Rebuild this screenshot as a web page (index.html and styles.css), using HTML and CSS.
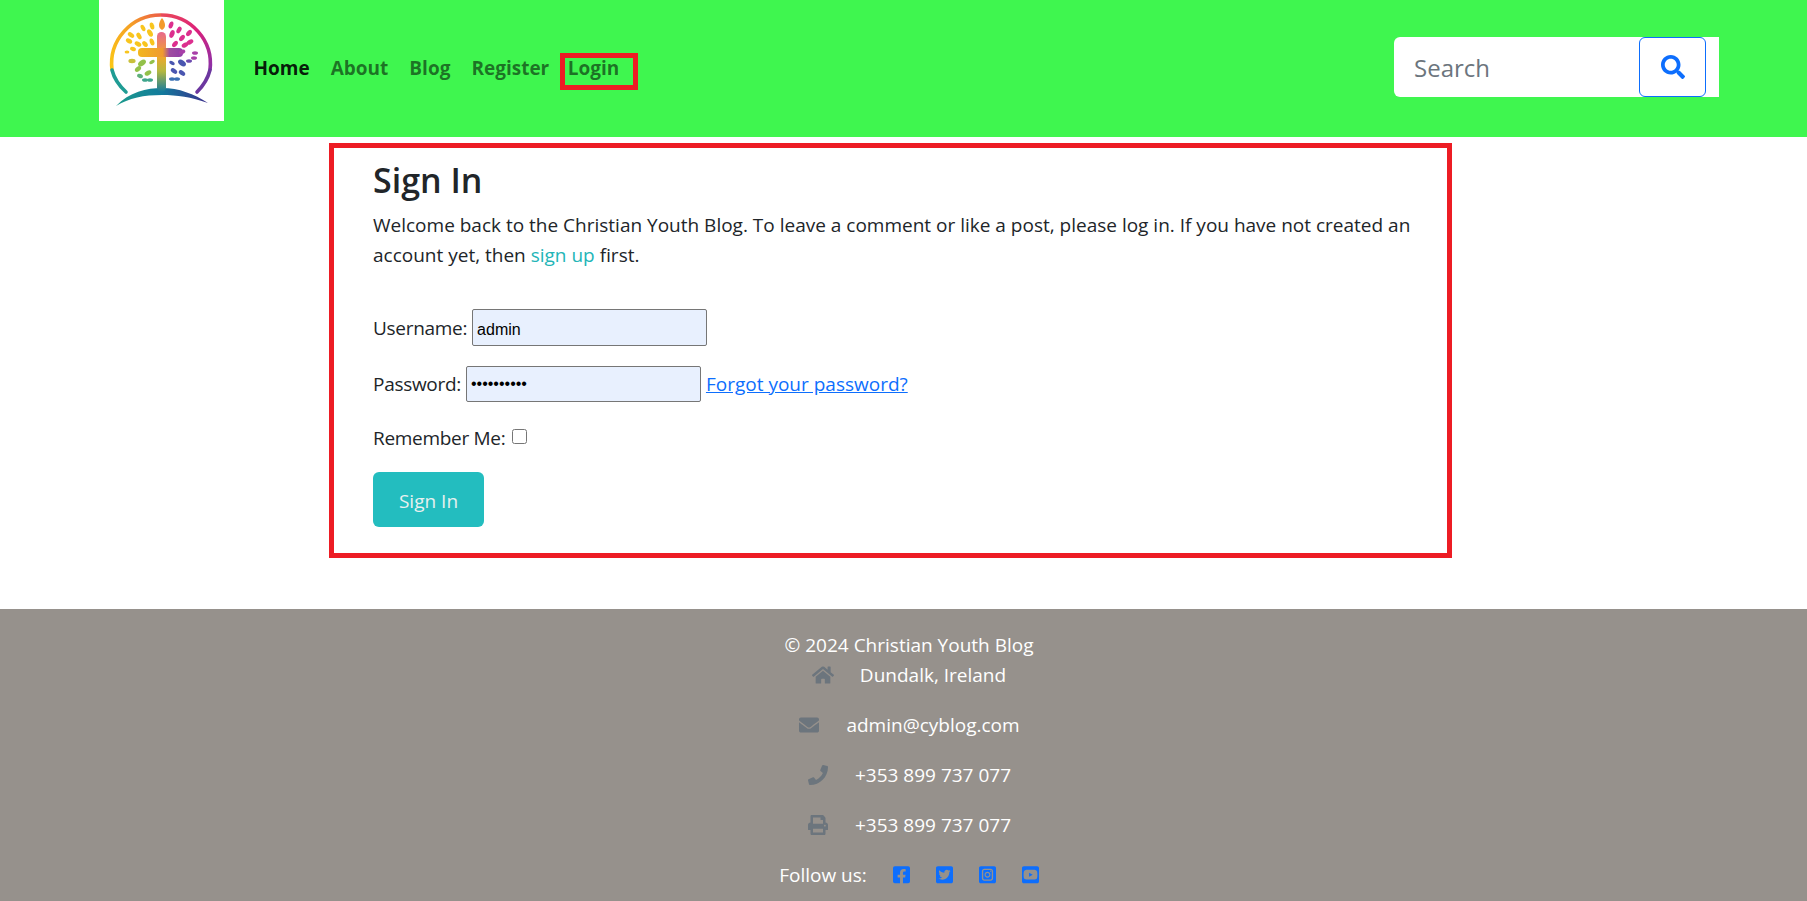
FILE: index.html
```html
<!DOCTYPE html>
<html lang="en">
<head>
    <meta charset="UTF-8">
    <meta name="viewport" content="width=device-width, initial-scale=1.0">
    <title>Sign In</title>
    <link rel="stylesheet" href="styles.css">
</head>
<body>

    <header class="site-header">
        <a class="logo" href="#">
            <svg viewBox="0 0 125 121" width="125" height="121">
                <defs>
                    <linearGradient id="ringLeft" x1="0" y1="1" x2="1" y2="0">
                        <stop offset="0" stop-color="#fbc815"/>
                        <stop offset="0.6" stop-color="#f5a125"/>
                        <stop offset="1" stop-color="#ec5f47"/>
                    </linearGradient>
                    <linearGradient id="ringRight" x1="0" y1="0" x2="1" y2="1">
                        <stop offset="0" stop-color="#ea4a58"/>
                        <stop offset="0.5" stop-color="#dc1f7a"/>
                        <stop offset="1" stop-color="#8a30a8"/>
                    </linearGradient>
                    <linearGradient id="ground" x1="0" y1="0" x2="1" y2="0">
                        <stop offset="0" stop-color="#1c9c8c"/>
                        <stop offset="0.5" stop-color="#127a9c"/>
                        <stop offset="1" stop-color="#3b2d8c"/>
                    </linearGradient>
                    <linearGradient id="stem" x1="0" y1="0" x2="0" y2="1">
                        <stop offset="0" stop-color="#e8688c"/>
                        <stop offset="0.4" stop-color="#f2a72a"/>
                        <stop offset="0.65" stop-color="#b5b840"/>
                        <stop offset="1" stop-color="#127a9e"/>
                    </linearGradient>
                    <linearGradient id="arm" x1="0" y1="0" x2="1" y2="0">
                        <stop offset="0" stop-color="#f2b71f"/>
                        <stop offset="0.55" stop-color="#f09a30"/>
                        <stop offset="0.7" stop-color="#a04da0"/>
                        <stop offset="1" stop-color="#8f3fa8"/>
                    </linearGradient>
                </defs>
                <path d="M13 70 A49 49 0 0 1 62 15" fill="none" stroke="url(#ringLeft)" stroke-width="3.6"/>
                <path d="M62 15 A49 49 0 0 1 111 70" fill="none" stroke="url(#ringRight)" stroke-width="3.6"/>
                <path d="M13 70 Q16 82 27 92" fill="none" stroke="#1f9c94" stroke-width="3.6" stroke-linecap="round"/>
                <path d="M111 70 Q108 82 98 92" fill="none" stroke="#6c379f" stroke-width="3.6" stroke-linecap="round"/>
                <path d="M17 106 C30 92 48 88 63 88 C80 88 95 94 109 103 C92 97 78 95 63 95 C45 95 30 98 17 106 Z" fill="url(#ground)"/>
                <rect x="58" y="32" width="9" height="60" rx="4.5" fill="url(#stem)"/>
                <rect x="39" y="48" width="45" height="9" rx="4" fill="url(#arm)"/>
                <path d="M63 18 C67 23 67 28 63 30 C59 28 59 23 63 18 Z" fill="#f39a2c"/>
                <g fill="#f8c51e">
                    <ellipse cx="32" cy="35" rx="3.6" ry="2.2" transform="rotate(35 32 35)"/>
                    <ellipse cx="40" cy="36" rx="3.6" ry="2.2" transform="rotate(60 40 36)"/>
                    <ellipse cx="51" cy="33" rx="4" ry="2.4" transform="rotate(60 51 33)"/>
                    <ellipse cx="53" cy="26" rx="3.6" ry="2.2" transform="rotate(75 53 26)"/>
                    <ellipse cx="44" cy="28" rx="3.4" ry="2" transform="rotate(60 44 28)"/>
                    <ellipse cx="30" cy="41" rx="3.4" ry="2.2" transform="rotate(30 30 41)"/>
                    <ellipse cx="39" cy="44" rx="3.6" ry="2.2" transform="rotate(30 39 44)"/>
                    <ellipse cx="46" cy="44" rx="3.4" ry="2.2" transform="rotate(50 46 44)"/>
                    <ellipse cx="53" cy="42" rx="3.6" ry="2.2" transform="rotate(70 53 42)"/>
                    <ellipse cx="34" cy="49" rx="3" ry="2" transform="rotate(20 34 49)"/>
                    <ellipse cx="28" cy="52" rx="2.4" ry="1.6"/>
                </g>
                <g fill="#dc2f8e">
                    <ellipse cx="72" cy="25" rx="3.6" ry="2.2" transform="rotate(-70 72 25)"/>
                    <ellipse cx="80" cy="30" rx="3.6" ry="2.2" transform="rotate(-60 80 30)"/>
                    <ellipse cx="90" cy="33" rx="3.6" ry="2.2" transform="rotate(-50 90 33)"/>
                    <ellipse cx="73" cy="34" rx="4" ry="2.4" transform="rotate(-70 73 34)"/>
                    <ellipse cx="83" cy="38" rx="3.6" ry="2.2" transform="rotate(-50 83 38)"/>
                    <ellipse cx="91" cy="42" rx="3.6" ry="2.2" transform="rotate(-30 91 42)"/>
                    <ellipse cx="76" cy="44" rx="3.6" ry="2.2" transform="rotate(-50 76 44)"/>
                    <ellipse cx="86" cy="45" rx="3.6" ry="2.2" transform="rotate(-30 86 45)"/>
                    <ellipse cx="83" cy="52" rx="3.4" ry="2.2" fill="#a83fa8" transform="rotate(-20 83 52)"/>
                    <ellipse cx="96" cy="53" rx="3" ry="1.8" fill="#a83fa8"/>
                    <ellipse cx="95" cy="58" rx="3" ry="1.8" fill="#a83fa8"/>
                </g>
                <g fill="#93c14a">
                    <ellipse cx="33" cy="61" rx="3.6" ry="2.2" fill="#c9c03c"/>
                    <ellipse cx="43" cy="63" rx="4.4" ry="2.6" transform="rotate(-35 43 63)"/>
                    <ellipse cx="53" cy="62" rx="3" ry="1.8" transform="rotate(-30 53 62)"/>
                    <ellipse cx="39" cy="69" rx="3.6" ry="2.2" transform="rotate(-40 39 69)"/>
                    <ellipse cx="49" cy="73" rx="3.6" ry="2.2" transform="rotate(-30 49 73)"/>
                    <ellipse cx="41" cy="76" rx="3" ry="2" fill="#5fb07a" transform="rotate(20 41 76)"/>
                    <ellipse cx="46" cy="80" rx="3" ry="1.8" fill="#3fa58c"/>
                    <ellipse cx="51" cy="80" rx="3" ry="1.8" fill="#3fa58c"/>
                </g>
                <g fill="#4a56b0">
                    <ellipse cx="83" cy="63" rx="4.4" ry="2.6" transform="rotate(35 83 63)"/>
                    <ellipse cx="73" cy="63" rx="3" ry="1.8" transform="rotate(30 73 63)"/>
                    <ellipse cx="90" cy="61" rx="3" ry="1.8" fill="#6d4cb0"/>
                    <ellipse cx="75" cy="71" rx="3.6" ry="2.2" transform="rotate(35 75 71)"/>
                    <ellipse cx="83" cy="73" rx="3.6" ry="2.2" transform="rotate(35 83 73)"/>
                    <ellipse cx="73" cy="79" rx="3" ry="1.8" fill="#3a70b4"/>
                    <ellipse cx="78" cy="79" rx="3" ry="1.8" fill="#3a70b4"/>
                </g>
            </svg>
        </a>
        <nav class="main-nav">
            <a class="nav-link active" href="#">Home</a>
            <a class="nav-link" href="#">About</a>
            <a class="nav-link" href="#">Blog</a>
            <a class="nav-link" href="#">Register</a>
            <a class="nav-link login-link" href="#">Login</a>
        </nav>
        <form class="search-form">
            <input class="search-input" type="text" placeholder="Search">
            <button class="search-btn" type="button">
                <svg viewBox="0 0 512 512" width="24" height="24"><path fill="#0d6efd" d="M505 442.7L405.3 343c-4.5-4.5-10.6-7-17-7H372c27.6-35.3 44-79.7 44-128C416 93.1 322.9 0 208 0S0 93.1 0 208s93.1 208 208 208c48.3 0 92.7-16.4 128-44v16.3c0 6.4 2.5 12.5 7 17l99.7 99.7c9.4 9.4 24.6 9.4 33.9 0l28.3-28.3c9.4-9.4 9.4-24.6.1-34zM208 336c-70.7 0-128-57.2-128-128 0-70.7 57.2-128 128-128 70.7 0 128 57.2 128 128 0 70.7-57.2 128-128 128z"/></svg>
            </button>
        </form>
    </header>

    <main class="signin-box">
        <h2 class="signin-title">Sign In</h2>
        <p class="signin-text">Welcome back to the Christian Youth Blog. To leave a comment or like a post, please log in. If you have not created an account yet, then <a class="signup-link" href="#">sign up</a> first.</p>

        <form class="signin-form">
            <p class="field">
                <label for="id_login">Username:</label>
                <input class="text-field" type="text" id="id_login" value="admin">
            </p>
            <p class="field">
                <label for="id_password">Password:</label>
                <input class="text-field password-field" type="password" id="id_password" value="adminadmin">
                <a class="forgot-link" href="#">Forgot your password?</a>
            </p>
            <p class="field remember">
                <label for="id_remember">Remember Me:</label>
                <input class="check-field" type="checkbox" id="id_remember">
            </p>
            <button class="signin-btn" type="button">Sign In</button>
        </form>
    </main>

    <footer class="site-footer">
        <p class="copyright">© 2024 Christian Youth Blog</p>
        <p class="contact">
            <svg class="contact-icon" viewBox="0 0 576 512"><path d="M280.37 148.26L96 300.11V464a16 16 0 0 0 16 16l112.06-.29a16 16 0 0 0 15.92-16V368a16 16 0 0 1 16-16h64a16 16 0 0 1 16 16v95.64a16 16 0 0 0 16 16.05L464 480a16 16 0 0 0 16-16V300L295.67 148.26a12.19 12.19 0 0 0-15.3 0zM571.6 251.47L488 182.56V44.05a12 12 0 0 0-12-12h-56a12 12 0 0 0-12 12v72.61L318.47 43a48 48 0 0 0-61 0L4.34 251.47a12 12 0 0 0-1.6 16.9l25.5 31A12 12 0 0 0 45.15 301l235.22-193.74a12.19 12.19 0 0 1 15.3 0L530.9 301a12 12 0 0 0 16.9-1.6l25.5-31a12 12 0 0 0-1.7-16.93z"/></svg>
            Dundalk, Ireland
        </p>
        <p class="contact">
            <svg class="contact-icon" viewBox="0 0 512 512"><path d="M502.3 190.8c3.9-3.1 9.7-.2 9.7 4.7V400c0 26.5-21.5 48-48 48H48c-26.5 0-48-21.5-48-48V195.6c0-5 5.7-7.8 9.7-4.7 22.4 17.4 52.1 39.5 154.1 113.6 21.1 15.4 56.7 47.8 92.2 47.6 35.7.3 72-32.8 92.3-47.6 102-74.1 131.6-96.3 154-113.7zM256 320c23.2.4 56.6-29.2 73.4-41.4 132.7-96.3 142.8-104.7 173.4-128.7 5.8-4.5 9.2-11.5 9.2-18.9v-19c0-26.5-21.5-48-48-48H48C21.5 64 0 85.5 0 112v19c0 7.4 3.4 14.3 9.2 18.9 30.6 23.9 40.7 32.4 173.4 128.7 16.8 12.2 50.2 41.8 73.4 41.4z"/></svg>
            admin@cyblog.com
        </p>
        <p class="contact">
            <svg class="contact-icon" viewBox="0 0 512 512"><path d="M493.4 24.6l-104-24c-11.3-2.6-22.9 3.3-27.5 13.9l-48 112c-4.2 9.8-1.4 21.3 6.9 28l60.6 49.6c-36 76.7-98.9 140.5-177.2 177.2l-49.6-60.6c-6.8-8.3-18.2-11.1-28-6.9l-112 48C3.9 366.5-2 378.1.6 389.4l24 104C27.1 504.2 36.7 512 48 512c256.1 0 464-207.5 464-464 0-11.2-7.7-20.9-18.6-23.4z"/></svg>
            +353 899 737 077
        </p>
        <p class="contact">
            <svg class="contact-icon" viewBox="0 0 512 512"><path d="M448 192V77.25c0-8.49-3.37-16.62-9.37-22.63L393.37 9.37c-6-6-14.14-9.37-22.63-9.37H96C78.33 0 64 14.33 64 32v160c-35.35 0-64 28.65-64 64v112c0 8.84 7.16 16 16 16h48v96c0 17.67 14.33 32 32 32h320c17.67 0 32-14.33 32-32v-96h48c8.84 0 16-7.16 16-16V256c0-35.35-28.65-64-64-64zm-64 256H128v-96h256v96zm0-224H128V64h192v48c0 8.84 7.16 16 16 16h48v96zm48 72c-13.25 0-24-10.75-24-24 0-13.26 10.75-24 24-24s24 10.74 24 24c0 13.25-10.75 24-24 24z"/></svg>
            +353 899 737 077
        </p>
        <p class="follow">
            <span class="follow-label">Follow us:</span>
            <a class="social" href="#"><svg viewBox="0 0 448 512"><path d="M400 32H48A48 48 0 0 0 0 80v352a48 48 0 0 0 48 48h137.25V327.69h-63V256h63v-54.64c0-62.15 37-96.48 93.67-96.48 27.14 0 55.52 4.84 55.52 4.84v61h-31.27c-30.81 0-40.42 19.12-40.42 38.73V256h68.78l-11 71.69h-57.78V480H400a48 48 0 0 0 48-48V80a48 48 0 0 0-48-48z"/></svg></a>
            <a class="social" href="#"><svg viewBox="0 0 448 512"><path d="M400 32H48C21.5 32 0 53.5 0 80v352c0 26.5 21.5 48 48 48h352c26.5 0 48-21.5 48-48V80c0-26.5-21.5-48-48-48zm-48.9 158.8c.2 2.8.2 5.7.2 8.5 0 86.7-66 186.6-186.6 186.6-37.2 0-71.7-10.8-100.7-29.4 5.3.6 10.4.8 15.8.8 30.7 0 58.9-10.4 81.4-28-28.8-.6-53-19.5-61.3-45.5 10.1 1.5 19.2 1.5 29.6-1.2-30-6.1-52.5-32.5-52.5-64.4v-.8c8.7 4.9 18.9 7.9 29.6 8.3a65.447 65.447 0 0 1-29.2-54.6c0-12.2 3.2-23.4 8.9-33.1 32.3 39.8 80.8 65.8 135.2 68.6-9.3-44.5 24-80.6 64-80.6 18.9 0 35.9 7.9 47.9 20.7 14.8-2.8 29-8.3 41.6-15.8-4.9 15.2-15.1 28-28.6 36 13.1-1.4 25.8-5 37.6-10.1-8.9 13.1-20.1 24.7-32.9 34z"/></svg></a>
            <a class="social" href="#"><svg viewBox="0 0 448 512"><path fill-rule="evenodd" d="M48 32h352c26.5 0 48 21.5 48 48v352c0 26.5-21.5 48-48 48H48c-26.5 0-48-21.5-48-48V80c0-26.5 21.5-48 48-48zM140 96c-36 0-64 28-64 64v192c0 36 28 64 64 64h168c36 0 64-28 64-64V160c0-36-28-64-64-64zM140 132h168c16 0 28 12 28 28v192c0 16-12 28-28 28H140c-16 0-28-12-28-28V160c0-16 12-28 28-28zM224 178c-43 0-78 35-78 78s35 78 78 78 78-35 78-78-35-78-78-78zM224 210c25 0 46 21 46 46s-21 46-46 46-46-21-46-46 21-46 46-46zM308 146a16 16 0 1 0 .1 0z"/></svg></a>
            <a class="social" href="#"><svg viewBox="0 0 448 512"><path d="M186.8 202.1l95.2 54.1-95.2 54.1V202.1zM448 80v352c0 26.5-21.5 48-48 48H48c-26.5 0-48-21.5-48-48V80c0-26.5 21.5-48 48-48h352c26.5 0 48 21.5 48 48zm-42 176.3s0-59.6-7.6-88.2c-4.2-15.8-16.5-28.2-32.2-32.4C337.9 128 224 128 224 128s-113.9 0-142.2 7.7c-15.7 4.2-28 16.6-32.2 32.4-7.6 28.5-7.6 88.2-7.6 88.2s0 59.6 7.6 88.2c4.2 15.8 16.5 27.7 32.2 31.9C110.1 384 224 384 224 384s113.9 0 142.2-7.7c15.7-4.2 28-16.1 32.2-31.9 7.6-28.5 7.6-88.1 7.6-88.1z"/></svg></a>
        </p>
    </footer>

</body>
</html>
```

FILE: styles.css
```css
body {
    font-family: 'Open Sans', 'Noto Sans', sans-serif;
    font-size: 19px;
    color: #212529;
    background-color: #fff;
    margin: 0;
    padding: 0;
}

a {
    text-decoration: none;
}

p {
    margin: 0;
}

/* header */
.site-header {
    display: flex;
    align-items: flex-start;
    height: 137px;
    padding: 0 88px 0 99px;
    background-color: #3ff64f;
}

.logo {
    display: block;
    width: 125px;
    height: 121px;
    background-color: #fff;
}

.main-nav {
    display: flex;
    align-items: center;
    height: 137px;
    margin-left: 19px;
}

.nav-link {
    padding: 0 10.5px;
    color: rgba(0, 0, 0, 0.55);
    font-size: 19px;
    font-weight: 700;
    line-height: 27px;
}

.nav-link.active {
    color: rgba(0, 0, 0, 0.9);
}

.login-link {
    margin: 6px 0 0 0;
    padding: 0 14px 7px 3px;
    border: 5px solid #ed1c24;
    line-height: 20px;
}

.search-form {
    display: flex;
    width: 325px;
    height: 60px;
    margin-top: 37px;
    margin-left: auto;
    background-color: #fff;
    border-radius: 6px 0 0 6px;
}

.search-input {
    flex: 1;
    min-width: 0;
    padding: 0 20px;
    font-family: inherit;
    font-size: 24px;
    color: #212529;
    background: transparent;
    border: none;
    outline: none;
}

.search-input::placeholder {
    color: #6c757d;
}

.search-btn {
    display: flex;
    align-items: center;
    justify-content: center;
    width: 67px;
    margin-right: 13px;
    background-color: #fff;
    border: 1px solid #0d6efd;
    border-radius: 6px;
}

/* sign in */
.signin-box {
    box-sizing: border-box;
    width: 1123px;
    height: 415px;
    margin: 6px 0 0 329px;
    padding: 10px 34px 0 39px;
    border: 5px solid #ed1c24;
}

.signin-title {
    margin: 0 0 8px;
    font-size: 34px;
    font-weight: 600;
    line-height: 44px;
}

.signin-text {
    line-height: 30px;
    margin-bottom: 39px;
}

.field {
    display: flex;
    align-items: center;
    gap: 5px;
    margin-bottom: 20px;
    line-height: 30px;
}

.field label {
    letter-spacing: -0.3px;
}

.remember {
    margin-top: 21px;
    margin-bottom: 19px;
}

.text-field {
    box-sizing: border-box;
    width: 235px;
    height: 37px;
    padding: 5px 4px 1px;
    font-family: 'Liberation Sans', Arial, sans-serif;
    font-size: 16px;
    color: #000;
    background-color: #e8f0fe;
    border: 1px solid #767676;
    border-radius: 2px;
}

.password-field {
    height: 36px;
    padding-top: 1px;
}

.forgot-link {
    color: #0d6efd;
    text-decoration: underline;
}

.check-field {
    width: 15px;
    height: 15px;
    margin: 0 0 3px 2px;
}

.signin-btn {
    width: 111px;
    height: 55px;
    padding-top: 3px;
    font-family: inherit;
    font-size: 19px;
    color: #e8f0ef;
    background-color: #23bdbf;
    border: none;
    border-radius: 6px;
}

.signup-link {
    color: #23b5b7;
}

/* footer */
.site-footer {
    box-sizing: border-box;
    height: 292px;
    margin-top: 51px;
    padding: 22px 0 0 11px;
    color: #fff;
    background-color: #96918c;
    text-align: center;
}

.copyright {
    line-height: 29px;
}

.contact {
    display: flex;
    align-items: center;
    justify-content: center;
    height: 30px;
    margin-bottom: 20px;
}

.contact-icon {
    width: 22px;
    height: 20px;
    margin-right: 26px;
    fill: #6c757d;
}

.follow {
    display: flex;
    align-items: center;
    justify-content: center;
    height: 30px;
}

.follow-label {
    margin-right: 26px;
}

.social {
    display: block;
    width: 17px;
    height: 20px;
    margin-right: 26px;
}

.social:last-child {
    margin-right: 0;
}

.social svg {
    display: block;
    fill: #0d6efd;
}
```
